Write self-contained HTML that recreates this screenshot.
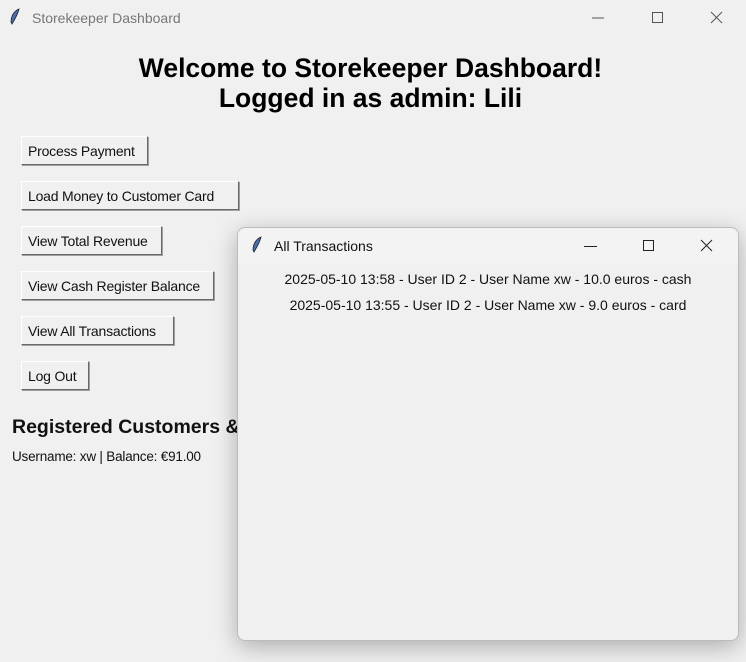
<!DOCTYPE html>
<html><head><style>
body{margin:0;width:746px;height:662px;background:#f0f0f0;font-family:"Liberation Sans",sans-serif;position:relative;overflow:hidden}
.a{position:absolute}
.tb{font-size:14px;color:#777;left:32px;top:10px}
.h{left:0;width:741px;text-align:center;font-weight:bold;font-size:26.5px;color:#000;line-height:30px;top:53px}
.b{position:absolute;left:21px;height:29px;border:1px solid;border-color:#fff #696969 #696969 #fff;box-shadow:1px 1px 0 #a0a0a0;background:#f0f0f0;font-size:14px;line-height:29px;padding:0 6px;box-sizing:border-box;color:#111;white-space:nowrap;letter-spacing:-0.2px}
.pop{left:237px;top:227px;width:500px;height:412px;background:#f0f0f0;border:1px solid #bcbcbc;border-radius:8px;box-shadow:0 6px 24px rgba(0,0,0,.28)}
.pt{position:absolute;top:0;left:0;right:0;height:36px;background:#f3f3f3;border-radius:8px 8px 0 0}
.tx{position:absolute;left:0;width:500px;text-align:center;font-size:14px;color:#111}
</style></head><body>
<svg class="a" style="left:9px;top:8px" width="12" height="18" viewBox="0 0 12 18"><path d="M10 1C5 3 2 8 2 14l1 2C6 11 9 6 10 1Z" fill="#4b6fa8" stroke="#223" stroke-width=".8"/></svg>
<div class="a tb">Storekeeper Dashboard</div>
<svg class="a" style="left:590px;top:10px" width="140" height="16"><path d="M2 8h12" stroke="#555"/><rect x="62.5" y="2.5" width="10" height="10" fill="none" stroke="#555"/><path d="M121 2l11 11M132 2l-11 11" stroke="#555"/></svg>
<div class="a h">Welcome to Storekeeper Dashboard!<br>Logged in as admin: Lili</div>
<div class="b" style="top:136px;width:127px">Process Payment</div>
<div class="b" style="top:181px;width:218px">Load Money to Customer Card</div>
<div class="b" style="top:226px;width:141px">View Total Revenue</div>
<div class="b" style="top:271px;width:193px">View Cash Register Balance</div>
<div class="b" style="top:316px;width:153px">View All Transactions</div>
<div class="b" style="top:361px;width:68px">Log Out</div>
<div class="a" style="left:12px;top:416px;font-weight:bold;font-size:19.5px;color:#111">Registered Customers &amp;</div>
<div class="a" style="left:12px;top:449px;font-size:13.5px;color:#111;letter-spacing:-0.2px">Username: xw | Balance: €91.00</div>
<div class="a pop">
<div class="pt"></div>
<svg class="a" style="left:13px;top:8px" width="12" height="18" viewBox="0 0 12 18"><path d="M10 1C5 3 2 8 2 14l1 2C6 11 9 6 10 1Z" fill="#4b6fa8" stroke="#223" stroke-width=".8"/></svg>
<div class="a" style="left:36px;top:10px;font-size:14px;color:#111">All Transactions</div>
<svg class="a" style="left:346px;top:11px" width="130" height="16"><path d="M0 7.5h13" stroke="#222"/><rect x="59.5" y="1.5" width="10" height="10" fill="none" stroke="#222"/><path d="M117 1l11 11M128 1l-11 11" stroke="#222"/></svg>
<div class="tx" style="top:43px">2025-05-10 13:58 - User ID 2 - User Name xw - 10.0 euros - cash</div>
<div class="tx" style="top:69px">2025-05-10 13:55 - User ID 2 - User Name xw - 9.0 euros - card</div>
</div>
</body></html>
